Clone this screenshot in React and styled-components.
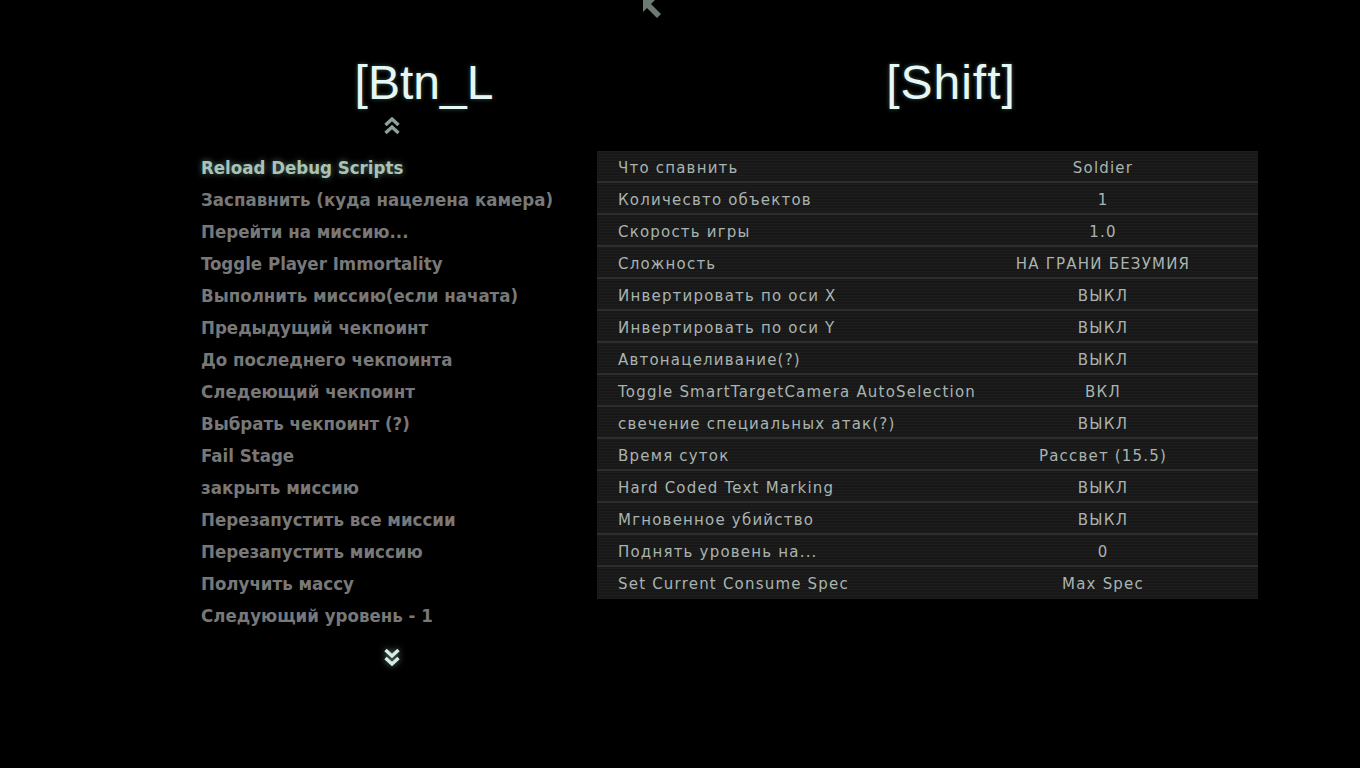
import React from 'react';
import styled, { createGlobalStyle } from "styled-components";

const GlobalStyle = createGlobalStyle`
  html, body {
    margin: 0;
    padding: 0;
    background: #000;
  }
  body {
    width: 1360px;
    height: 768px;
    overflow: hidden;
  }
`;

const Screen = styled.div`
  position: relative;
  width: 1360px;
  height: 768px;
  background: #000;
  box-sizing: border-box;
  padding: 59px 0 0 201px;
`;

const Cursor = styled.svg`
  position: absolute;
  left: 641px;
  top: 0;
`;

const HeaderRow = styled.div`
  display: flex;
`;

const Title = styled.div`
  width: ${p => p.width}px;
  padding-left: ${p => p.shift}px;
  box-sizing: border-box;
  text-align: center;
  font-family: "Liberation Sans", Arial, sans-serif;
  font-size: 48px;
  line-height: 48px;
  letter-spacing: ${p => p.spacing || 0}px;
  color: #e6f8f6;
  text-shadow: 0 0 4px rgba(180, 240, 235, 0.35);
`;

const Body = styled.div`
  display: flex;
  align-items: flex-start;
`;

const LeftColumn = styled.div`
  width: 396px;
  display: flex;
  flex-flow: column;
`;

const ChevronSlot = styled.div`
  height: ${p => p.h}px;
  box-sizing: border-box;
  padding-top: ${p => p.top}px;
  padding-right: 14px;
  display: flex;
  justify-content: center;
  align-items: flex-start;
`;

const MenuList = styled.ul`
  list-style: none;
  margin: 1px 0 0;
  padding: 0;
`;

const MenuItem = styled.li`
  height: 32px;
  line-height: 32px;
  font-family: "DejaVu Sans Condensed", "DejaVu Sans", sans-serif;
  font-weight: bold;
  font-size: 18.5px;
  white-space: nowrap;
  color: ${p => p.active ? "#a9c3b7" : "#787878"};
  text-shadow: ${p => p.active ? "0 0 6px rgba(150, 200, 180, 0.55)" : "none"};
`;

const RightColumn = styled.div`
  width: 661px;
  margin-top: 44px;
`;

const Table = styled.div`
  display: flex;
  flex-flow: column;
  background-color: #181818;
  background-image: repeating-linear-gradient(
    to bottom,
    rgba(255, 255, 255, 0.025) 0px,
    rgba(255, 255, 255, 0.025) 1px,
    rgba(0, 0, 0, 0) 1px,
    rgba(0, 0, 0, 0) 3px
  );
`;

const Row = styled.div`
  display: flex;
  height: 32px;
  box-sizing: border-box;
  align-items: center;
  border-bottom: 2px solid ${p => p.last ? "transparent" : "#2d2d2d"};
  padding-top: 4px;
  font-family: "DejaVu Sans", Verdana, sans-serif;
  font-size: 15px;
  letter-spacing: 1.2px;
  color: #a9b4b0;
`;

const Label = styled.div`
  width: 351px;
  padding-left: 21px;
  box-sizing: border-box;
  white-space: nowrap;
`;

const Value = styled.div`
  width: 310px;
  text-align: center;
  white-space: nowrap;
`;

const menu = [
  "Reload Debug Scripts",
  "Заспавнить (куда нацелена камера)",
  "Перейти на миссию...",
  "Toggle Player Immortality",
  "Выполнить миссию(если начата)",
  "Предыдущий чекпоинт",
  "До последнего чекпоинта",
  "Следеющий чекпоинт",
  "Выбрать чекпоинт (?)",
  "Fail Stage",
  "закрыть миссию",
  "Перезапустить все миссии",
  "Перезапустить миссию",
  "Получить массу",
  "Следующий уровень - 1",
];

const settings = [
  ["Что спавнить", "Soldier"],
  ["Количесвто объектов", "1"],
  ["Скорость игры", "1.0"],
  ["Сложность", "НА ГРАНИ БЕЗУМИЯ"],
  ["Инвертировать по оси X", "ВЫКЛ"],
  ["Инвертировать по оси Y", "ВЫКЛ"],
  ["Автонацеливание(?)", "ВЫКЛ"],
  ["Toggle SmartTargetCamera AutoSelection", "ВКЛ"],
  ["свечение специальных атак(?)", "ВЫКЛ"],
  ["Время суток", "Рассвет (15.5)"],
  ["Hard Coded Text Marking", "ВЫКЛ"],
  ["Мгновенное убийство", "ВЫКЛ"],
  ["Поднять уровень на...", "0"],
  ["Set Current Consume Spec", "Max Spec"],
];

const DoubleChevron = ({ up, color, glow }) => (
  <svg width="18" height="20" viewBox="0 0 18 20"
    style={glow ? { filter: "drop-shadow(0 0 3px rgba(170,230,215,0.6))" } : undefined}>
    <g fill="none" stroke={color} strokeWidth="3.4" strokeLinejoin="miter"
      transform={up ? "" : "rotate(180 9 10)"}>
      <polyline points="2.5,9 9,3 15.5,9" />
      <polyline points="2.5,17 9,11 15.5,17" />
    </g>
  </svg>
);

const App = () => {
  return (
    <Screen>
      <GlobalStyle />
      <Cursor width="24" height="20" viewBox="0 0 24 20">
        <polygon points="2,0 14,0 10,4 20,14 16,18 6,8 2,12" fill="#6b7b73" />
      </Cursor>
      <HeaderRow>
        <Title width={396} shift={50}>[Btn_L</Title>
        <Title width={661} shift={47} spacing={1}>[Shift]</Title>
      </HeaderRow>
      <Body>
        <LeftColumn>
          <ChevronSlot h={44} top={9}>
            <DoubleChevron up color="#8ea198" />
          </ChevronSlot>
          <MenuList>
            {menu.map((item, i) => (
              <MenuItem key={item} active={i === 0}>{item}</MenuItem>
            ))}
          </MenuList>
          <ChevronSlot h={42} top={15}>
            <DoubleChevron color="#d6ece6" glow />
          </ChevronSlot>
        </LeftColumn>
        <RightColumn>
          <Table>
            {settings.map(([label, value], i) => (
              <Row key={label} last={i === settings.length - 1}>
                <Label>{label}</Label>
                <Value>{value}</Value>
              </Row>
            ))}
          </Table>
        </RightColumn>
      </Body>
    </Screen>
  );
};

export default App;
